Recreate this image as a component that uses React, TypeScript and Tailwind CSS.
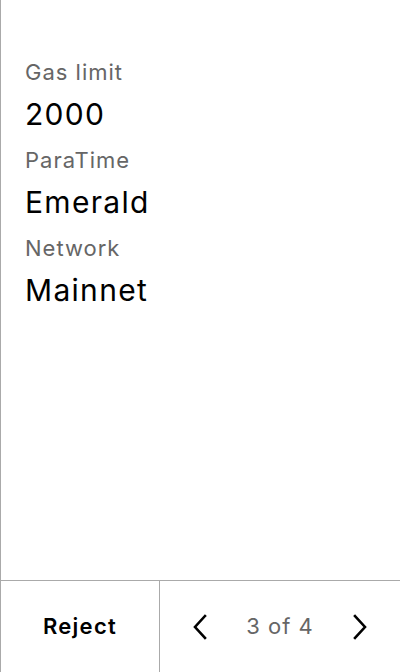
import React from "react";

const rows = [
  { label: "Gas limit", value: "2000" },
  { label: "ParaTime", value: "Emerald" },
  { label: "Network", value: "Mainnet" },
];

function Chevron({ dir }: { dir: "left" | "right" }) {
  return (
    <svg width="16" height="26" viewBox="0 0 16 26" fill="none" stroke="#000" strokeWidth="2.6" strokeLinecap="square">
      {dir === "left" ? <path d="M13 2 L3 13 L13 24" /> : <path d="M3 2 L13 13 L3 24" />}
    </svg>
  );
}

export default function App() {
  return (
    <div className="flex h-[672px] w-[400px] flex-col border-l border-[#aaaaaa] bg-white font-['Inter',sans-serif]">
      <div className="flex-1 px-6 pt-[58px]">
        {rows.map((row) => (
          <div key={row.label} className="mb-3">
            <div className="mb-2 h-7 text-[22px] leading-7 tracking-[1px] text-[#666666]">{row.label}</div>
            <div className="h-10 text-[30px] leading-10 tracking-[1.3px] text-black">{row.value}</div>
          </div>
        ))}
      </div>
      <div className="flex h-[92px] border-t border-[#aaaaaa]">
        <div className="flex w-[159px] items-center justify-center border-r border-[#aaaaaa]">
          <span className="text-[22px] font-semibold tracking-[1.3px] text-black">Reject</span>
        </div>
        <div className="flex flex-1 items-center justify-between px-[32px]">
          <Chevron dir="left" />
          <span className="text-[22px] tracking-[1px] text-[#666666]">3 of 4</span>
          <Chevron dir="right" />
        </div>
      </div>
    </div>
  );
}
